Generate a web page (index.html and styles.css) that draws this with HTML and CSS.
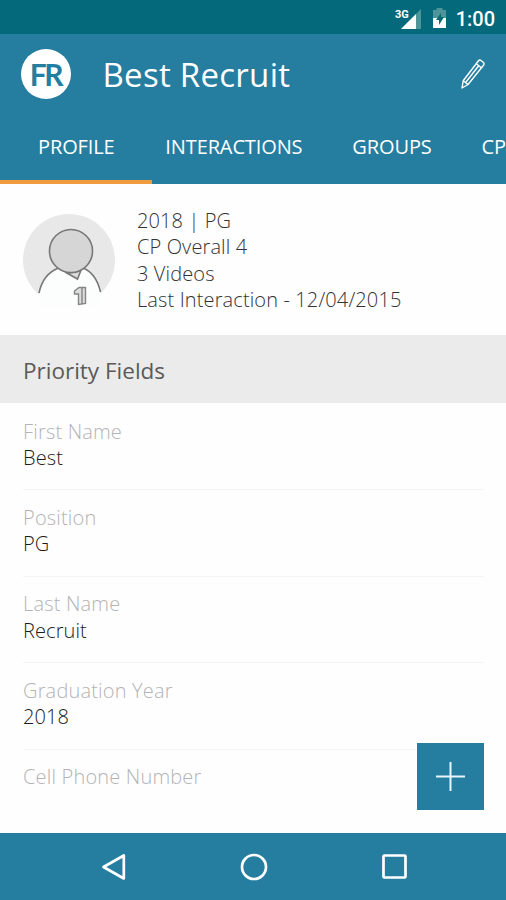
FILE: index.html
```html
<!DOCTYPE html>
<html lang="en">
<head>
<meta charset="utf-8">
<title>Best Recruit</title>
<link rel="stylesheet" href="styles.css">
</head>
<body>
<div class="screen">
  <div class="status">
    <svg class="signal" width="27" height="24" viewBox="0 0 27 24">
      <path d="M25 3v20H5z" fill="#4d9599"/>
      <path d="M20 8V23H5z" fill="#fff"/>
      <text class="network" x="-1" y="12">3G</text>
    </svg>
    <svg class="battery" width="15" height="22" viewBox="0 0 15 22">
      <path d="M1 3h3.500V1h6v2H14v8H1z" fill="#4d9599"/>
      <path d="M1 11h13v10H1z" fill="#fff"/>
      <path d="M9 6L4 13h3v5l5-8H9z" fill="#04697a"/>
    </svg>
    <span class="clock">1:00</span>
  </div>
  <header class="header">
    <div class="toolbar">
      <div class="logo"><span class="logo-f">F</span><span>R</span></div>
      <h1 class="title">Best Recruit</h1>
      <svg class="pencil" width="26" height="32" viewBox="0 0 26 32" fill="none" stroke="#fff" stroke-width="1.400" stroke-linejoin="round">
        <path d="M2 30l1.200-7.200L18.500 2.800Q19.500 1.500 21 2.500l2.500 2Q24.700 5.500 23.700 7L8 26.500zM3.200 22.800L8 26.500M16.300 5.700l5 4M18.500 8L6 24"/>
      </svg>
    </div>
    <nav class="tabs">
      <span class="tab active">PROFILE</span>
      <span class="tab interactions">INTERACTIONS</span>
      <span class="tab groups">GROUPS</span>
      <span class="tab">CP</span>
    </nav>
  </header>
  <section class="profile">
    <svg class="avatar" width="92" height="92" viewBox="0 0 92 92">
      <circle cx="46" cy="46" r="46" fill="#e8e8e8"/>
      <path d="M16 79Q21 60 36 54H60Q73 60 77.500 78V92H16z" fill="#fcfefe"/>
      <g fill="none" stroke="#777" stroke-width="1.600">
        <path d="M16 79Q20 60 35.500 54M60 54Q73 59 77.500 78"/>
        <path d="M42 58L54.500 65L58 56Q51 60 42 58z" fill="#ddd"/>
        <circle cx="48" cy="37" r="21.500" fill="#d6d6d6"/>
        <path d="M51.500 77L56 73.500H62.500V89.500L55.500 90.500V80H51.500zM59 74V90" fill="#ddd" stroke="#858585" stroke-width="1.400"/>
      </g>
    </svg>
    <div class="summary">
      <div>2018 | PG</div>
      <div>CP Overall 4</div>
      <div>3 Videos</div>
      <div>Last Interaction - 12/04/2015</div>
    </div>
  </section>
  <h2 class="section">Priority Fields</h2>
  <main class="fields">
    <div class="field"><div class="label">First Name</div><div class="value">Best</div></div>
    <div class="field"><div class="label">Position</div><div class="value">PG</div></div>
    <div class="field"><div class="label">Last Name</div><div class="value">Recruit</div></div>
    <div class="field"><div class="label">Graduation Year</div><div class="value">2018</div></div>
    <div class="field"><div class="label">Cell Phone Number</div></div>
    <div class="add">
      <svg width="29" height="29" viewBox="0 0 29 29" stroke="#eaf6fb" stroke-width="2"><path d="M0 14.500H29M14.500 0V29"/></svg>
    </div>
  </main>
  <footer class="navbar">
    <svg width="25" height="28" viewBox="0 0 25 28"><path d="M2.500 14L22.800 2.500V25.500z"/></svg>
    <svg width="28" height="28" viewBox="0 0 28 28"><circle cx="14" cy="14" r="12"/></svg>
    <svg width="25" height="25" viewBox="0 0 25 25"><rect x="1.500" y="1.500" width="22" height="22" rx="1"/></svg>
  </footer>
</div>
</body>
</html>
```
FILE: styles.css
```css
* { box-sizing: border-box; }
body { margin: 0; font-family: "Open Sans", sans-serif; background: #fff; }
h1, h2 { margin: 0; font-weight: 400; }
svg { display: block; flex: none; }
.screen { width: 506px; height: 900px; overflow: hidden; display: flex; flex-direction: column; }
.status { height: 34px; flex: none; background: #04697a; display: flex; align-items: center; justify-content: flex-end; padding-right: 11px; color: #fff; }
.signal { margin: 2px 9px 0 0; overflow: visible; }
.network { font: 700 11px Roboto, sans-serif; fill: #fff; }
.battery { margin: 2px 9px 0 0; }
.clock { font: 500 20px/34px Roboto, sans-serif; padding-top: 3px; }
.header { height: 150px; flex: none; background: #257ea0; color: #fff; display: flex; flex-direction: column; }
.toolbar { height: 80px; display: flex; align-items: center; padding: 0 20px 0 21px; }
.logo { width: 50px; height: 50px; border-radius: 50%; background: #fff; color: #257ea0; display: flex; justify-content: center; align-items: center; font: 700 30px/50px Lato, sans-serif; letter-spacing: -1.500px; padding-bottom: 1px; }
.logo-f { letter-spacing: -2.500px; }
.title { margin-left: 31.500px; font-size: 33px; line-height: 81px; letter-spacing: 0.28px; flex: 1; }
.tabs { height: 70px; display: flex; font-size: 20px; line-height: 66px; white-space: nowrap; }
.tab { letter-spacing: -0.12px; }
.active { width: 153px; padding-left: 38px; border-bottom: 4px solid #ef9b3e; }
.interactions { width: 187px; padding-left: 13px; margin-right: 14px; }
.groups { width: 130px; }
.profile { height: 151px; flex: none; display: flex; padding: 30px 0 0 23px; background: #fefefe; }
.summary { margin: -6px 0 0 22px; font-size: 20px; font-weight: 300; letter-spacing: 0.12px; line-height: 26.4px; color: #333; white-space: nowrap; }
.section { height: 68px; flex: none; background: #ebebeb; padding-left: 23px; font-size: 22.500px; line-height: 71px; color: #5a5a5a; }
.fields { height: 430px; flex: none; position: relative; padding: 1px 22px 0 23px; background: #fefefe; }
.field { height: 86.400px; padding-top: 14.700px; border-bottom: 1px solid #f4f4f4; font-size: 20px; font-weight: 300; line-height: 26.400px; }
.field:nth-child(5) { border: 0; }
.label { color: #b4b4b4; letter-spacing: 0.18px; }
.value { color: #1c1c1c; letter-spacing: 0.1px; }
.add { position: absolute; right: 22px; bottom: 23px; width: 67px; height: 67px; background: #257ea0; display: flex; align-items: center; justify-content: center; }
.navbar { flex: 1; background: #257ea0; display: flex; align-items: center; justify-content: space-between; padding: 0 99px 0 101px; }
.navbar svg { fill: none; stroke: #fff; stroke-width: 2.700; stroke-linejoin: round; }
```
